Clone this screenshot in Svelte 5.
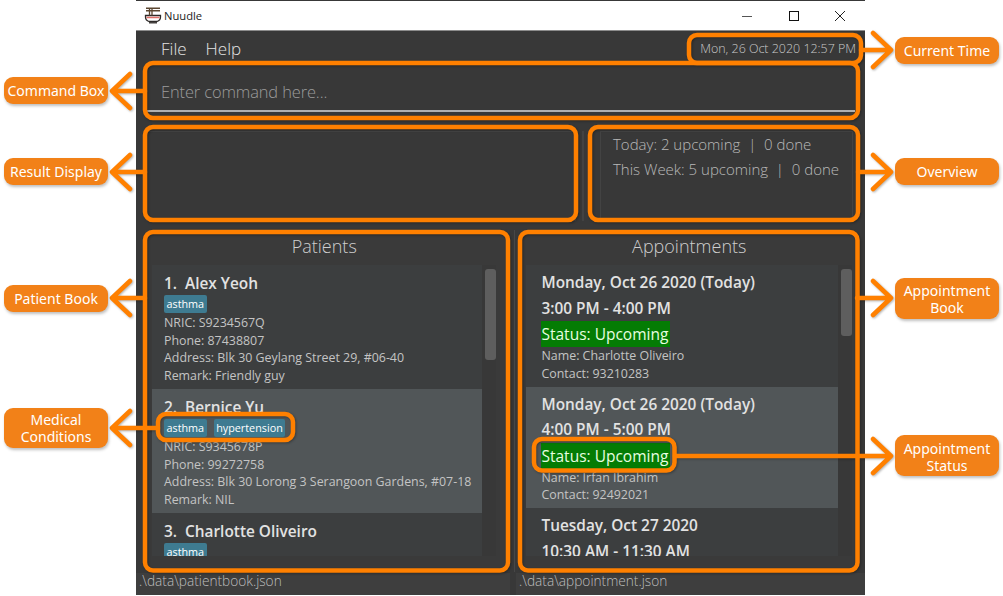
<script>
  const patients = [
    { name: 'Alex Yeoh', tags: ['asthma'], rows: ['NRIC: S9234567Q', 'Phone: 87438807', 'Address: Blk 30 Geylang Street 29, #06-40', 'Remark: Friendly guy'] },
    { name: 'Bernice Yu', tags: ['asthma', 'hypertension'], rows: ['NRIC: S9345678P', 'Phone: 99272758', 'Address: Blk 30 Lorong 3 Serangoon Gardens, #07-18', 'Remark: NIL'] },
    { name: 'Charlotte Oliveiro', tags: ['asthma'], rows: [] }
  ];

  const appointments = [
    { date: 'Monday, Oct 26 2020 (Today)', time: '3:00 PM - 4:00 PM', name: 'Charlotte Oliveiro', contact: '93210283' },
    { date: 'Monday, Oct 26 2020 (Today)', time: '4:00 PM - 5:00 PM', name: 'Irfan Ibrahim', contact: '92492021' },
    { date: 'Tuesday, Oct 27 2020', time: '10:30 AM - 11:30 AM' }
  ];

  // callouts drawn over the screenshot: x, y, width, height of each frame
  const frames = [
    [689, 35, 172, 28], [145, 63, 713, 55], [145, 127, 431, 93], [590, 127, 268, 93],
    [145, 232, 363, 338.5], [520, 232, 337.5, 338.5], [158, 414, 135, 26], [534, 439, 140.5, 31.5]
  ];
  const leftArrows = [[91, 145], [172, 145], [298, 145], [428, 158]];
  const rightArrows = [[50, 861], [172, 858], [298, 857], [456, 675]];
  const labels = [
    { text: 'Command Box', cls: 'left', top: 77, h: 27 },
    { text: 'Result Display', cls: 'left', top: 158, h: 27 },
    { text: 'Patient Book', cls: 'left', top: 285, h: 27 },
    { text: 'Medical Conditions', cls: 'left', top: 408, h: 40 },
    { text: 'Current Time', cls: 'right', top: 37, h: 27 },
    { text: 'Overview', cls: 'right', top: 158, h: 27 },
    { text: 'Appointment Book', cls: 'right', top: 278, h: 41 },
    { text: 'Appointment Status', cls: 'right lower', top: 435, h: 41 }
  ];
</script>

<div class="page">
  <div class="window">
    <header class="titlebar">
      <svg class="logo" viewBox="0 0 18 17" width="18" height="17" aria-hidden="true">
        <path d="M1.500 8.500h15v1.500c0 2.300-1.600 3.900-3.500 4.500h-8c-1.900-.6-3.500-2.200-3.500-4.500z" fill="#fff" stroke="#2e2a28" stroke-width="1.300" />
        <path d="M2.500 10.500h13" stroke="#e0706a" stroke-width="1.500" />
        <path d="M5 15.800h8" stroke="#2e2a28" stroke-width="1.300" />
        <path d="M2 1.200h14M2 3.800h14" stroke="#5b4630" stroke-width="1.400" />
        <path d="M5.500 2v6.500M8 2v6.500" stroke="#5b4630" stroke-width="1.300" />
      </svg>
      <span class="app-name">Nuudle</span>
      <div class="controls">
        <svg width="12" height="12" viewBox="0 0 12 12" aria-hidden="true"><path d="M1 6.500h10" stroke="#555" /></svg>
        <svg width="12" height="12" viewBox="0 0 12 12" aria-hidden="true"><rect x="1.500" y="1.500" width="9" height="9" fill="none" stroke="#111" /></svg>
        <svg width="12" height="12" viewBox="0 0 12 12" aria-hidden="true"><path d="M1 1l10 10M11 1L1 11" stroke="#222" /></svg>
      </div>
    </header>

    <div class="menubar">
      <span>File</span>
      <span>Help</span>
      <div class="clock">Mon, 26 Oct 2020 12:57 PM</div>
    </div>

    <div class="command">
      <div class="command-input">Enter command here...</div>
    </div>

    <div class="top-row">
      <div class="box result"></div>
      <div class="divider"></div>
      <div class="box overview">
        <p>Today: 2 upcoming &nbsp;|&nbsp; 0 done</p>
        <p>This Week: 5 upcoming &nbsp;|&nbsp; 0 done</p>
      </div>
    </div>

    <div class="lists">
      <section class="panel patients">
        <h2>Patients</h2>
        <div class="list">
          <div class="cells">
            {#each patients as p, i}
              <article class="cell patient" class:alt={i % 2 === 1}>
                <div class="name">{i + 1}.&nbsp; {p.name}</div>
                <div class="tags">
                  {#each p.tags as t}<span class="tag">{t}</span>{/each}
                </div>
                {#each p.rows as r}<div class="row">{r}</div>{/each}
              </article>
            {/each}
          </div>
          <div class="scrolltrack"><div class="thumb patients-thumb"></div></div>
        </div>
      </section>

      <div class="split"></div>

      <section class="panel appts">
        <h2>Appointments</h2>
        <div class="list">
          <div class="cells">
            {#each appointments as a, i}
              <article class="cell appt" class:alt={i % 2 === 1}>
                <div class="date">{a.date}</div>
                <div class="date">{a.time}</div>
                {#if a.name}
                  <div class="status">Status: Upcoming</div>
                  <div class="row">Name: {a.name}</div>
                  <div class="row">Contact: {a.contact}</div>
                {/if}
              </article>
            {/each}
          </div>
          <div class="scrolltrack"><div class="thumb appts-thumb"></div></div>
        </div>
      </section>
    </div>

    <footer class="footer">
      <div class="path path-left">.\data\patientbook.json</div>
      <div class="path path-right">.\data\appointment.json</div>
    </footer>
  </div>

  <svg class="overlay" width="1003" height="596" aria-hidden="true">
    <g fill="none" stroke="#ff8000" stroke-width="4.500" stroke-linejoin="round" stroke-linecap="round">
      {#each frames as [x, y, w, h]}
        <rect {x} {y} width={w} height={h} rx="8" />
      {/each}
      {#each leftArrows as [y, end]}
        <path d="M130 {y - 17}L112 {y}L130 {y + 17}M112 {y}H{end}" />
      {/each}
      {#each rightArrows as [y, start]}
        <path d="M873 {y - 17}L891 {y}L873 {y + 17}M891 {y}H{start}" />
      {/each}
    </g>
  </svg>

  {#each labels as l}
    <div class="label {l.cls}" style="top: {l.top}px; height: {l.h}px">{l.text}</div>
  {/each}
</div>

<style>
  :global(body) {
    margin: 0;
    background: #fff;
  }

  .page {
    position: relative;
    width: 1003px;
    height: 596px;
    overflow: hidden;
    font-family: 'Open Sans', sans-serif;
  }

  .window {
    display: flex;
    flex-direction: column;
    width: 729px;
    height: 595px;
    margin-left: 136px;
    background: #383838;
    color: #fff;
  }

  .titlebar {
    display: flex;
    align-items: center;
    flex: none;
    height: 30px;
    margin-top: 1px;
    padding-left: 8px;
    background: #fff;
    border-bottom: 1px solid #8c8c8c;
    box-sizing: border-box;
    color: #222;
    font-size: 11.200px;
  }

  .app-name {
    margin-left: 2px;
  }

  .controls {
    display: flex;
    gap: 34.500px;
    margin-left: auto;
    margin-right: 19px;
  }

  .menubar {
    display: flex;
    align-items: center;
    gap: 19px;
    flex: none;
    height: 35px;
    padding: 0 9px 0 25px;
    font-size: 17px;
    font-weight: 300;
    color: #e4e4e4;
  }

  .clock {
    margin-left: auto;
    font-size: 12.450px;
    color: #cacaca;
  }

  .command {
    flex: none;
    height: 46px;
    margin: 0 10px 19px;
    padding-left: 15px;
    box-sizing: border-box;
    border-bottom: 2px solid #b0b0b0;
  }

  .command-input {
    padding-top: 14px;
    font-size: 16.400px;
    font-weight: 300;
    letter-spacing: -0.1px;
    color: #9c9c9c;
  }

  .top-row {
    display: flex;
    flex: none;
    height: 90px;
    padding: 0 12px 0 10px;
  }

  .box {
    box-sizing: border-box;
    border: 1px solid #434343;
  }

  .result {
    width: 430px;
  }

  .divider {
    width: 2px;
    margin: 0 6px;
    background: #424242;
  }

  .overview {
    flex: 1;
    margin-left: 10px;
    padding: 0 0 0 12px;
    font-size: 15px;
    font-weight: 300;
    color: #b8b8b8;
  }

  .overview p {
    margin: 0;
    line-height: 25px;
    white-space: nowrap;
  }

  .lists {
    display: flex;
    flex: none;
    height: 342px;
    margin-top: 9px;
    padding: 0 7px 0 9px;
    gap: 5px;
  }

  .panel {
    display: flex;
    flex-direction: column;
    box-sizing: border-box;
    padding: 0 6px 16px 6px;
    background: #3a3a3a;
  }

  .patients {
    width: 365px;
    padding: 0 13px 16px 7px;
  }

  .appts {
    width: 338px;
  }

  .split {
    width: 1px;
    background: #474747;
  }

  .panel h2 {
    flex: none;
    height: 35px;
    margin: 0;
    font-size: 18px;
    font-weight: 300;
    line-height: 33px;
    text-align: center;
    color: #cfcfcf;
  }

  .list {
    display: flex;
    flex: 1;
    min-height: 0;
    background: #3c3e3f;
  }

  .cells {
    flex: 1;
    overflow: hidden;
  }

  .scrolltrack {
    flex: none;
    width: 14px;
    background: #383838;
  }

  .thumb {
    width: 11px;
    margin: 4px 0 0 3px;
    border-radius: 3px;
    background: #5e5e5e;
  }

  .patients-thumb {
    height: 91px;
  }

  .appts-thumb {
    height: 67px;
  }

  .cell {
    box-sizing: border-box;
    overflow: hidden;
    font-size: 12.400px;
    color: #c4c4c4;
  }

  .cell.alt {
    background: #515658;
  }

  .patient {
    height: 124px;
    padding: 7px 0 0 12px;
  }

  .appt {
    height: 121.700px;
    padding: 6px 0 0 15px;
  }

  .name,
  .date {
    font-size: 15.400px;
    font-weight: 600;
    line-height: 24px;
    color: #e2e2e2;
    white-space: pre;
  }

  .date {
    height: 25.500px;
  }

  .tags {
    display: flex;
    align-items: flex-start;
    gap: 7px;
    height: 19px;
    margin-top: -1px;
  }

  .tag {
    padding: 0 2.500px;
    border-radius: 2px;
    background: #3e7b91;
    font-size: 10.800px;
    line-height: 18px;
    color: #fff;
  }

  .row {
    line-height: 17.700px;
    white-space: nowrap;
  }

  .status {
    width: 129px;
    height: 26px;
    margin-top: -1px;
    background: #047c04;
    color: #e8ffe0;
    font-size: 15.500px;
    font-weight: 500;
    line-height: 26px;
    white-space: nowrap;
  }

  .footer {
    display: flex;
    flex: none;
    height: 22px;
    margin-top: 1px;
    gap: 6px;
    font-size: 13.700px;
    font-weight: 300;
    line-height: 16px;
    color: #bdbdbd;
  }

  .path {
    background: #3e3e3e;
    padding-left: 3px;
    box-sizing: border-box;
  }

  .path-left {
    width: 374px;
  }

  .path-right {
    flex: 1;
  }

  .overlay {
    position: absolute;
    top: 0;
    left: 0;
    filter: drop-shadow(1px 1px 1px rgba(0, 0, 0, 0.3));
  }

  .label {
    position: absolute;
    display: flex;
    align-items: center;
    justify-content: center;
    box-sizing: border-box;
    width: 104px;
    padding: 0 2px;
    border-radius: 9px;
    background: #f28118;
    box-shadow: 1px 2px 3px rgba(0, 0, 0, 0.25);
    color: #fff;
    font-family: 'Noto Sans', sans-serif;
    font-size: 14px;
    line-height: 17px;
    text-align: center;
  }

  .label.left {
    left: 4px;
  }

  .label.right {
    left: 895px;
  }

  .label.lower {
    padding-top: 2px;
  }
</style>
